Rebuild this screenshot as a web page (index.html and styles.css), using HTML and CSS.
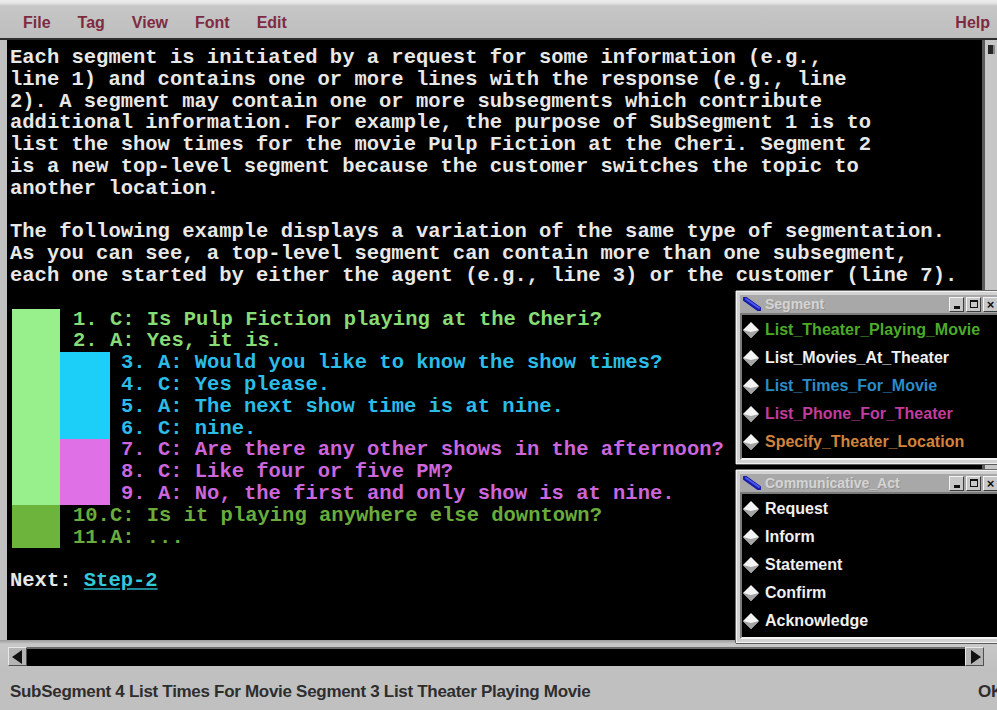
FILE: index.html
```html
<!DOCTYPE html>
<html lang="en">
<head>
<meta charset="utf-8">
<title>Dialogue Segment Tagger</title>
<link rel="stylesheet" href="styles.css">
</head>
<body>
<div class="app">
  <nav class="menubar">
    <ul class="menus">
      <li class="menu">File</li>
      <li class="menu">Tag</li>
      <li class="menu">View</li>
      <li class="menu">Font</li>
      <li class="menu">Edit</li>
    </ul>
    <span class="menu">Help</span>
  </nav>

  <div class="workspace">
    <main class="doc">
      <p class="para">Each segment is initiated by a request for some information (e.g.,
line 1) and contains one or more lines with the response (e.g., line
2). A segment may contain one or more subsegments which contribute
additional information. For example, the purpose of SubSegment 1 is to
list the show times for the movie Pulp Fiction at the Cheri. Segment 2
is a new top-level segment because the customer switches the topic to
another location.</p>
      <p class="para">The following example displays a variation of the same type of segmentation.
As you can see, a top-level segment can contain more than one subsegment,
each one started by either the agent (e.g., line 3) or the customer (line 7).</p>

      <div class="dialogue">
        <div class="seg seg-theater">
          <div class="bar"></div>
          <div class="seg-body">
            <div class="line"><span class="num">1.</span>C: Is Pulp Fiction playing at the Cheri?</div>
            <div class="line"><span class="num">2.</span>A: Yes, it is.</div>
            <div class="sub sub-times">
              <div class="bar"></div>
              <div class="sub-body">
                <div class="line"><span class="num">3.</span>A: Would you like to know the show times?</div>
                <div class="line"><span class="num">4.</span>C: Yes please.</div>
                <div class="line"><span class="num">5.</span>A: The next show time is at nine.</div>
                <div class="line"><span class="num">6.</span>C: nine.</div>
              </div>
            </div>
            <div class="sub sub-phone">
              <div class="bar"></div>
              <div class="sub-body">
                <div class="line"><span class="num">7.</span>C: Are there any other shows in the afternoon?</div>
                <div class="line"><span class="num">8.</span>C: Like four or five PM?</div>
                <div class="line"><span class="num">9.</span>A: No, the first and only show is at nine.</div>
              </div>
            </div>
          </div>
        </div>
        <div class="seg seg-location">
          <div class="bar"></div>
          <div class="seg-body">
            <div class="line"><span class="num">10.</span>C: Is it playing anywhere else downtown?</div>
            <div class="line"><span class="num">11.</span>A: ...</div>
          </div>
        </div>
      </div>

      <p class="next">Next: <a class="step" href="#step-2">Step-2</a></p>
    </main>
    <div class="vscroll"><span class="vscroll-btn"></span></div>
  </div>

  <div class="hscroll">
    <span class="arrow">
      <svg viewBox="0 0 18 18" width="18" height="18"><path d="M3 9 L13 2 L13 16 Z" fill="#111"/></svg>
    </span>
    <span class="trough"></span>
    <span class="arrow">
      <svg viewBox="0 0 18 18" width="18" height="18"><path d="M15 9 L5 2 L5 16 Z" fill="#111"/></svg>
    </span>
  </div>

  <footer class="status">
    <span>SubSegment 4 List Times For Movie Segment 3 List Theater Playing Movie</span>
    <span class="status-ok">OK</span>
  </footer>

  <section class="palette palette-seg">
    <header class="titlebar">
      <svg class="win-icon" viewBox="0 0 18 14" width="18" height="14">
        <path d="M2 2 L16 12" stroke="#1a1aa8" stroke-width="5" stroke-linecap="round"/>
        <path d="M3 2 L16 11" stroke="#4a5cf0" stroke-width="2" stroke-linecap="round"/>
      </svg>
      <span class="title">Segment</span>
      <span class="winbtns">
        <span class="winbtn"><i class="g-min"></i></span>
        <span class="winbtn"><i class="g-max"></i></span>
        <span class="winbtn"><i class="g-close">×</i></span>
      </span>
    </header>
    <ul class="list">
      <li class="item c-green"><svg class="diamond" viewBox="0 0 16 16"><path d="M8 0 L16 8 L8 16 L0 8 Z" fill="#f4f4f4"/><path d="M16 8 L8 16 L0 8 L8 10 Z" fill="#a4a4a4"/></svg>List_Theater_Playing_Movie</li>
      <li class="item c-white"><svg class="diamond" viewBox="0 0 16 16"><path d="M8 0 L16 8 L8 16 L0 8 Z" fill="#f4f4f4"/><path d="M16 8 L8 16 L0 8 L8 10 Z" fill="#a4a4a4"/></svg>List_Movies_At_Theater</li>
      <li class="item c-blue"><svg class="diamond" viewBox="0 0 16 16"><path d="M8 0 L16 8 L8 16 L0 8 Z" fill="#f4f4f4"/><path d="M16 8 L8 16 L0 8 L8 10 Z" fill="#a4a4a4"/></svg>List_Times_For_Movie</li>
      <li class="item c-magenta"><svg class="diamond" viewBox="0 0 16 16"><path d="M8 0 L16 8 L8 16 L0 8 Z" fill="#f4f4f4"/><path d="M16 8 L8 16 L0 8 L8 10 Z" fill="#a4a4a4"/></svg>List_Phone_For_Theater</li>
      <li class="item c-orange"><svg class="diamond" viewBox="0 0 16 16"><path d="M8 0 L16 8 L8 16 L0 8 Z" fill="#f4f4f4"/><path d="M16 8 L8 16 L0 8 L8 10 Z" fill="#a4a4a4"/></svg>Specify_Theater_Location</li>
    </ul>
  </section>

  <section class="palette palette-act">
    <header class="titlebar">
      <svg class="win-icon" viewBox="0 0 18 14" width="18" height="14">
        <path d="M2 2 L16 12" stroke="#1a1aa8" stroke-width="5" stroke-linecap="round"/>
        <path d="M3 2 L16 11" stroke="#4a5cf0" stroke-width="2" stroke-linecap="round"/>
      </svg>
      <span class="title">Communicative_Act</span>
      <span class="winbtns">
        <span class="winbtn"><i class="g-min"></i></span>
        <span class="winbtn"><i class="g-max"></i></span>
        <span class="winbtn"><i class="g-close">×</i></span>
      </span>
    </header>
    <ul class="list">
      <li class="item c-white"><svg class="diamond" viewBox="0 0 16 16"><path d="M8 0 L16 8 L8 16 L0 8 Z" fill="#f4f4f4"/><path d="M16 8 L8 16 L0 8 L8 10 Z" fill="#a4a4a4"/></svg>Request</li>
      <li class="item c-white"><svg class="diamond" viewBox="0 0 16 16"><path d="M8 0 L16 8 L8 16 L0 8 Z" fill="#f4f4f4"/><path d="M16 8 L8 16 L0 8 L8 10 Z" fill="#a4a4a4"/></svg>Inform</li>
      <li class="item c-white"><svg class="diamond" viewBox="0 0 16 16"><path d="M8 0 L16 8 L8 16 L0 8 Z" fill="#f4f4f4"/><path d="M16 8 L8 16 L0 8 L8 10 Z" fill="#a4a4a4"/></svg>Statement</li>
      <li class="item c-white"><svg class="diamond" viewBox="0 0 16 16"><path d="M8 0 L16 8 L8 16 L0 8 Z" fill="#f4f4f4"/><path d="M16 8 L8 16 L0 8 L8 10 Z" fill="#a4a4a4"/></svg>Confirm</li>
      <li class="item c-white"><svg class="diamond" viewBox="0 0 16 16"><path d="M8 0 L16 8 L8 16 L0 8 Z" fill="#f4f4f4"/><path d="M16 8 L8 16 L0 8 L8 10 Z" fill="#a4a4a4"/></svg>Acknowledge</li>
    </ul>
  </section>
</div>
</body>
</html>
```

FILE: styles.css
```css
* { box-sizing: border-box; }

html, body {
  margin: 0;
  height: 100%;
}

body {
  background: #c0c0c0;
  overflow: hidden;
  font-family: "Liberation Sans", Arial, sans-serif;
}

.app {
  position: relative;
  width: 997px;
  height: 710px;
  display: flex;
  flex-direction: column;
  overflow: hidden;
}

/* ---- menu bar ---- */
.menubar {
  flex: none;
  height: 40px;
  display: flex;
  justify-content: space-between;
  align-items: center;
  padding: 8px 7px 0 23px;
  background: linear-gradient(#ececec 0, #e6e6e6 3px, #c6c6c6 6px, #bebebe 100%);
  border-bottom: 2px solid #2e2e2e;
}

.menus {
  display: flex;
  gap: 27px;
  list-style: none;
  margin: 0;
  padding: 0;
}

.menu {
  font-weight: bold;
  font-size: 16px;
  color: #7e2b42;
}

/* ---- document area ---- */
.workspace {
  flex: 1;
  display: flex;
  padding-left: 7px;
  min-height: 0;
}

.doc {
  flex: 1;
  background: #000;
  padding: 7px 0 0 3px;
  font: bold 20.5px/21.8px "Liberation Mono", "Courier New", monospace;
  color: #e8e8e8;
  overflow: hidden;
}

.para {
  margin: 0 0 21.8px;
  white-space: pre-line;
}

.line {
  white-space: pre;
}

.num {
  display: inline-block;
  width: 3ch;
}

.seg,
.sub {
  display: flex;
}

.seg > .bar {
  flex: none;
  width: 48px;
  margin-left: 2px;
}

.sub > .bar {
  flex: none;
  width: 50px;
}

.seg-body {
  flex: 1;
}

.seg-body > .line {
  padding-left: 13px;
}

.sub-body > .line {
  padding-left: 11px;
}

.seg-theater > .bar { background: #98f08c; }
.seg-theater > .seg-body > .line { color: #86dc76; }

.sub-times > .bar { background: #1ccff8; }
.sub-times .line { color: #2cbce8; }

.sub-phone > .bar { background: #e070e6; }
.sub-phone .line { color: #cc66dc; }

.seg-location > .bar { background: #6cb43c; }
.seg-location .line { color: #6aac3c; }

.next {
  margin: 21.8px 0 0;
  white-space: pre;
}

.step {
  color: #34c8d8;
  text-decoration: underline;
  text-decoration-color: #1e8a98;
}

.vscroll {
  flex: none;
  width: 15px;
  background: #c6c6c6;
  border-left: 3px solid #5a5a5a;
}

.vscroll-btn {
  display: block;
  margin: 5px 0 0 3px;
  width: 7px;
  height: 9px;
  background: #262626;
  border-right: 2px solid #888;
}

/* ---- horizontal scrollbar ---- */
.hscroll {
  flex: none;
  height: 30px;
  display: flex;
  padding: 7px 13px 4px 8px;
  background: linear-gradient(#9a9a9a 0, #c8c8c8 4px, #c0c0c0 100%);
}

.arrow {
  flex: none;
  width: 19px;
  display: grid;
  place-items: center;
  background: #b4b4b4;
  border: 1px solid;
  border-color: #e8e8e8 #505050 #505050 #e8e8e8;
}

.trough {
  flex: 1;
  background: #000;
  border-top: 2px solid #6a6a6a;
}

/* ---- status line ---- */
.status {
  flex: none;
  height: 40px;
  display: flex;
  justify-content: space-between;
  align-items: center;
  padding: 4px 0 0 10px;
  font-weight: bold;
  font-size: 17px;
  letter-spacing: -0.3px;
  color: #2e2e2e;
}

.status-ok {
  margin-right: -6px;
}

/* ---- floating tag palettes ---- */
.palette {
  position: absolute;
  left: 736px;
  width: 268px;
  padding: 3px;
  background: #d2d2d2;
  border: 1px solid #f2f2f2;
  border-right: none;
  box-shadow: -1px 0 0 #6a6a6a, 0 -1px 0 #6a6a6a, 0 1px 0 #5a5a5a;
}

.palette-seg { top: 291px; }
.palette-act { top: 470px; }

.titlebar {
  height: 18px;
  display: flex;
  align-items: center;
  gap: 4px;
  padding-left: 3px;
  background: #a8a8a8;
}

.win-icon {
  flex: none;
}

.title {
  font-weight: bold;
  font-size: 14px;
  color: #d4d4d4;
  text-shadow: 1px 1px 0 #939393;
}

.winbtns {
  margin-left: auto;
  display: flex;
  gap: 2px;
  padding-right: 3px;
}

.winbtn {
  width: 15px;
  height: 15px;
  display: grid;
  place-items: center;
  background: #c8c8c8;
  border: 1px solid;
  border-color: #f4f4f4 #3c3c3c #3c3c3c #f4f4f4;
}

.g-min {
  display: block;
  width: 6px;
  height: 3px;
  margin-top: 6px;
  background: #111;
}

.g-max {
  display: block;
  width: 8px;
  height: 8px;
  border: 1px solid #111;
  border-top-width: 2px;
}

.g-close {
  font-style: normal;
  font-weight: bold;
  font-size: 13px;
  line-height: 1;
  color: #111;
}

.list {
  list-style: none;
  margin: 0;
  padding: 1px 0 2px;
  background: #000;
  border: 2px solid;
  border-color: #7a7a7a #f4f4f4 #f4f4f4 #7a7a7a;
}

.item {
  height: 28px;
  display: flex;
  align-items: center;
  gap: 6px;
  padding-left: 1px;
  font-weight: bold;
  font-size: 16px;
}

.diamond {
  flex: none;
  width: 16px;
  height: 16px;
}

.c-green   { color: #4caa2a; }
.c-white   { color: #f0f0f0; }
.c-blue    { color: #2a8cc8; }
.c-magenta { color: #c23c9c; }
.c-orange  { color: #d2843c; }
```
